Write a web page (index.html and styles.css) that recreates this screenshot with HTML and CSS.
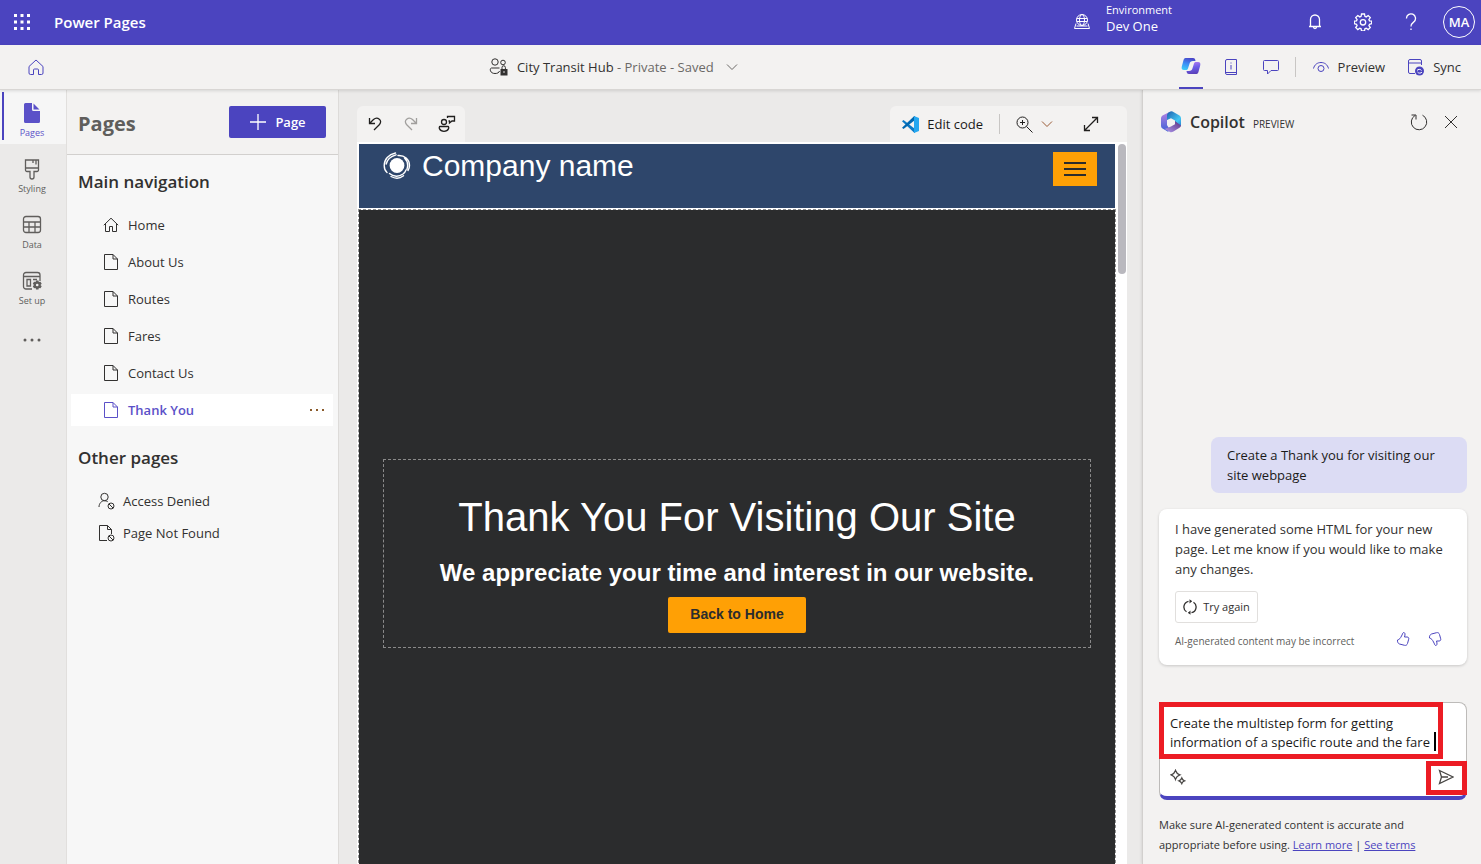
FILE: index.html
```html
<!DOCTYPE html>
<html lang="en">
<head>
<meta charset="utf-8">
<title>Power Pages</title>
<link rel="stylesheet" href="styles.css">
</head>
<body>
<svg class="defs" aria-hidden="true">
  <symbol id="i-page" viewBox="0 0 16 18"><path d="M1.5 1.500H10L14.500 6V16.500H1.500ZM10 1.500V6H14.500"/></symbol>
  <symbol id="i-chevron" viewBox="0 0 12 8"><path d="M1 1.500L6 6.500L11 1.500"/></symbol>
</svg>

<header class="topbar">
  <button class="icon-btn" aria-label="App launcher">
    <svg class="solid" width="16" height="16" viewBox="0 0 16 16"><path d="M0 0h3v3H0zM6.500 0h3v3h-3zM13 0h3v3h-3zM0 6.500h3v3H0zM6.500 6.500h3v3h-3zM13 6.500h3v3h-3zM0 13h3v3H0zM6.500 13h3v3h-3zM13 13h3v3h-3z"/></svg>
  </button>
  <span class="brand">Power Pages</span>
  <div class="environment">
    <svg width="18" height="18" viewBox="0 0 18 18"><circle cx="9" cy="7" r="5.500"/><ellipse cx="9" cy="7" rx="2.500" ry="5.500"/><path d="M3.800 5.500h10.400M3.800 8.500h10.400M3 10.500L1.500 15.500h15L15 10.500M3.500 13h11"/></svg>
    <div class="environment-text"><span class="environment-label">Environment</span><span>Dev One</span></div>
  </div>
  <div class="top-actions">
    <button class="icon-btn" aria-label="Notifications"><svg width="16" height="18" viewBox="0 0 16 18"><path class="bold-line" d="M3.500 13.500V6.500a4.500 4.500 0 0 1 9 0v7M2 13.500h12M6.500 14a1.500 1.500 0 0 0 3 0"/></svg></button>
    <button class="icon-btn" aria-label="Settings"><svg width="18" height="18" viewBox="0 0 18 18"><path class="bold-line" d="M7.500 1h3l.4 2.300 1.300.6 2-1.400 2.100 2.100-1.400 2 .6 1.200 2.200.4v2.500l-2.200.6-.6 1.300 1.400 1.900-2.100 2.100-2-1.400-1.300.6-.4 2.200h-3l-.4-2.200-1.300-.6-2 1.400-2.100-2.100 1.400-1.900-.6-1.300-2.200-.6V8.200l2.200-.4.6-1.200-1.400-2 2.100-2.100 2 1.400 1.300-.6z"/><circle class="bold-line" cx="9" cy="9.300" r="2.700"/></svg></button>
    <button class="icon-btn" aria-label="Help"><svg width="12" height="18" viewBox="0 0 12 18"><path class="bold-line" d="M1.500 5.500a4.500 4.500 0 1 1 7.500 3.200C7 10.300 6 11 6 13.500M6 15.500v1.500"/></svg></button>
    <button class="avatar">MA</button>
  </div>
</header>

<nav class="sitebar" aria-label="Site">
  <button class="icon-btn accent" aria-label="Home"><svg width="16" height="17" viewBox="0 0 16 17"><path d="M1 7.500L8 1l7 6.500v6.500a1.500 1.500 0 0 1-1.500 1.500H10.500V11a1 1 0 0 0-1-1h-3a1 1 0 0 0-1 1v4.500h-3A1.500 1.500 0 0 1 1 14z"/></svg></button>
  <button class="site-name">
    <svg width="20" height="20" viewBox="0 0 20 20"><circle cx="6" cy="5" r="3.200"/><circle cx="14" cy="5.500" r="2.300"/><path d="M10.500 11H2.500c-2 0-2 5.500 3.500 5.500 2.500 0 4-.8 4.500-2.500M13 12v-1.500a1.700 1.700 0 0 1 3.400 0V12"/><path class="fill-only" d="M11.500 12h7v6.500h-7z"/><circle class="hole" cx="15" cy="15" r=".8"/></svg>
    <span>City Transit Hub <span class="muted">- Private - Saved</span></span>
    <svg class="muted-icon" width="12" height="8"><use href="#i-chevron"/></svg>
  </button>
  <div class="site-actions">
    <button class="tool-tab" aria-label="Copilot">
      <svg class="logo" width="20" height="18" viewBox="0 0 20 18"><defs><linearGradient id="g1" x1="0.600" y1="0" x2="0.300" y2="1"><stop offset="0" stop-color="#4a45c8"/><stop offset=".5" stop-color="#3c8cf5"/><stop offset="1" stop-color="#3ccbf7"/></linearGradient><linearGradient id="g2" x1="0.300" y1="0" x2="0.500" y2="1"><stop offset="0" stop-color="#b07cf0"/><stop offset=".5" stop-color="#6a5ce6"/><stop offset="1" stop-color="#5a3fb8"/></linearGradient></defs><path fill="url(#g1)" d="M4.500 1H12c1.700 0 2.300 1 2.500 3H12c-2 0-3 1-3.500 2.800L7 11.500c-.5 1.200-1 1.500-2.500 1.500H3C.8 13 .3 11.500.8 9.500l1.600-6C2.800 2 3.300 1 4.500 1z"/><path fill="url(#g2)" d="M15.500 17H8c-1.700 0-2.300-1-2.500-3H8c2 0 3-1 3.500-2.800L13 6.500C13.500 5.300 14 5 15.500 5H17c2.200 0 2.700 1.500 2.200 3.500l-1.600 6c-.4 1.500-.9 2.500-2.100 2.500z"/></svg>
    </button>
    <button class="icon-btn accent" aria-label="Information"><svg width="14" height="18" viewBox="0 0 14 18"><path d="M3 1.500h9.500v15H3A1.500 1.500 0 0 1 1.500 15V3A1.500 1.500 0 0 1 3 1.500zM1.500 14.500h11M7 4.500v1M7 7v4.500"/></svg></button>
    <button class="icon-btn accent" aria-label="Comments"><svg width="18" height="18" viewBox="0 0 18 18"><path d="M2.500 2.500h13a1 1 0 0 1 1 1v8a1 1 0 0 1-1 1H9L5.500 16v-3.500h-3a1 1 0 0 1-1-1v-8a1 1 0 0 1 1-1z"/></svg></button>
    <span class="divider"></span>
    <button class="text-btn preview"><svg class="accent" width="18" height="16" viewBox="0 0 18 16"><path d="M1.500 9.500C2.500 5.500 5.500 3.500 9 3.500s6.500 2 7.500 6"/><circle cx="9" cy="9.500" r="3"/></svg>Preview</button>
    <button class="text-btn"><svg class="accent" width="18" height="18" viewBox="0 0 18 18"><path d="M8 15.500H3A1.500 1.500 0 0 1 1.500 14V3A1.500 1.500 0 0 1 3 1.500h10A1.500 1.500 0 0 1 14.500 3v4M1.500 5h13"/><circle class="fill-accent" cx="12.500" cy="13" r="4.500"/><path class="light-line" d="M10 12.500c1-1.500 3.500-1.500 4.500 0M10.500 14c1 1.500 3.500 1.500 4.500 0"/></svg>Sync</button>
  </div>
</nav>

<main class="workspace">
  <nav class="rail" aria-label="Workspaces">
    <button class="rail-item active"><svg class="solid" width="18" height="22" viewBox="0 0 18 22"><path d="M2.500 1H9v6.500A1.500 1.500 0 0 0 10.500 9H17v10.500a1.500 1.500 0 0 1-1.500 1.500h-13A1.500 1.500 0 0 1 1 19.500v-17A1.500 1.500 0 0 1 2.500 1zM10.500 1.500L16.500 7.500h-6z"/></svg>Pages</button>
    <button class="rail-item"><svg width="18" height="22" viewBox="0 0 18 22"><path class="bold-line" d="M2.500 2h13v10a1.500 1.500 0 0 1-1.500 1.500h-3V19a2 2 0 0 1-4 0v-5.500H4A1.500 1.500 0 0 1 2.500 12zM2.500 10h13M10 2v3M13 2v4.500"/></svg>Styling</button>
    <button class="rail-item"><svg width="20" height="22" viewBox="0 0 20 22"><path class="bold-line" d="M4 2.500h12A2.500 2.500 0 0 1 18.500 5v11a2.500 2.500 0 0 1-2.500 2.500H4A2.500 2.500 0 0 1 1.500 16V5A2.500 2.500 0 0 1 4 2.500zM1.500 8h17M1.500 13h17M7 8v10.500M13 8v10.500"/></svg>Data</button>
    <button class="rail-item"><svg width="20" height="22" viewBox="0 0 20 22"><path class="bold-line" d="M10 19H4a2.500 2.500 0 0 1-2.500-2.500V5A2.500 2.500 0 0 1 4 2.500h11.500A2.500 2.500 0 0 1 18 5v6M1.500 6.500H18M5 9.500h3.500V16H5zM11 9.500h4"/><path class="fill-only" d="M14 10.500h2.500l.3 1.600 1.700-.4 1.200 2-1.200 1.300 1.200 1.300-1.200 2-1.700-.4-.3 1.600H14l-.4-1.600-1.600.4-1.200-2L12 15l-1.200-1.300 1.200-2 1.600.4z"/><circle class="hole" cx="15.200" cy="15" r="1.300"/></svg>Set up</button>
    <button class="rail-more" aria-label="More"><svg class="solid" width="18" height="4" viewBox="0 0 18 4"><circle cx="2" cy="2" r="1.500"/><circle cx="9" cy="2" r="1.500"/><circle cx="16" cy="2" r="1.500"/></svg></button>
  </nav>

  <aside class="pages">
    <div class="pages-head">
      <h1>Pages</h1>
      <button class="primary"><svg width="18" height="18" viewBox="0 0 18 18"><path class="bold-line" d="M9 1v16M1 9h16"/></svg>Page</button>
    </div>
    <h2>Main navigation</h2>
    <ul class="page-list">
      <li><a href="#"><svg width="16" height="16" viewBox="0 0 16 16"><path d="M.8 8.200L8 1.200l7.200 7M2.500 7v7.500h4V9.500h3v5h4V7"/></svg>Home</a></li>
      <li><a href="#"><svg width="16" height="18"><use href="#i-page"/></svg>About Us</a></li>
      <li><a href="#"><svg width="16" height="18"><use href="#i-page"/></svg>Routes</a></li>
      <li><a href="#"><svg width="16" height="18"><use href="#i-page"/></svg>Fares</a></li>
      <li><a href="#"><svg width="16" height="18"><use href="#i-page"/></svg>Contact Us</a></li>
      <li class="selected"><a href="#"><svg width="16" height="18"><use href="#i-page"/></svg>Thank You</a><button class="row-more" aria-label="Page options"><svg class="solid" width="16" height="4" viewBox="0 0 16 4"><path d="M1 1h2v2H1zM7 1h2v2H7zM13 1h2v2h-2z"/></svg></button></li>
    </ul>
    <h2>Other pages</h2>
    <ul class="page-list other">
      <li><a href="#"><svg width="17" height="18" viewBox="0 0 17 18"><circle cx="6.500" cy="5" r="3.700"/><path d="M1 15c0-3.500 2.500-6.300 5.500-6.300 1.200 0 2.300.4 3.200 1"/><circle cx="13" cy="14" r="3"/><path d="M11 12l4 4"/></svg>Access Denied</a></li>
      <li><a href="#"><svg width="17" height="18" viewBox="0 0 17 18"><path d="M9 16.500H1.500v-15h8L13.500 5.500V10M9.500 1.500v4h4"/><circle cx="13" cy="14" r="3"/><path d="M11 12l4 4"/></svg>Page Not Found</a></li>
    </ul>
  </aside>

  <section class="editor">
    <div class="editor-tools">
      <div class="tool-group">
        <button class="icon-btn" aria-label="Undo"><svg width="14" height="14" viewBox="0 0 14 14"><path class="bold-line" d="M1.500 1v5.500H7M1.500 6.500L5.500 2.500c4-3.500 9.500 1 6 5L6 13"/></svg></button>
        <button class="icon-btn disabled" aria-label="Redo"><svg width="14" height="14" viewBox="0 0 14 14"><path class="bold-line" d="M12.500 1v5.500H7M12.500 6.500L8.500 2.500c-4-3.500-9.500 1-6 5L8 13"/></svg></button>
        <button class="icon-btn" aria-label="Feedback"><svg width="18" height="18" viewBox="0 0 18 18"><circle class="bold-line" cx="6" cy="7" r="2.500"/><path class="bold-line" d="M2 11.500h8c1.500 0 1 4.800-4 4.800s-5.500-4.800-4-4.800zM9.500 3V1.500h7v4.500H14L11.500 8V6h-1"/></svg></button>
      </div>
      <div class="tool-group right">
        <button class="text-btn dark"><svg class="logo" width="17" height="17" viewBox="0 0 17 17"><path fill="#0a79c6" d="M0 5.300l1.500-1.200L13 13v3.500L12.500 17z"/><path fill="#0067b0" d="M0 11.700L1.500 13 13 4V0l-1 .3z"/><path fill="#24a7f0" d="M12 0l5 2v13l-5 2z"/></svg>Edit code</button>
        <span class="divider"></span>
        <button class="zoom-btn" aria-label="Zoom"><svg width="17" height="17" viewBox="0 0 17 17"><circle cx="6.500" cy="6.500" r="5.500"/><path d="M10.500 10.500L16.500 16.500M6.500 4v5M4 6.500h5"/></svg><svg class="rust" width="12" height="8"><use href="#i-chevron"/></svg></button>
        <button class="icon-btn" aria-label="Full screen"><svg width="16" height="16" viewBox="0 0 16 16"><path class="bold-line" d="M1.500 14.500l13-13M9 1.500h5.500V7M1.500 9v5.500H7"/></svg></button>
      </div>
    </div>
    <div class="canvas">
      <div class="site">
        <div class="site-header">
          <div class="company">
            <svg class="logo" width="28" height="28" viewBox="0 0 28 28"><circle cx="14" cy="13.500" r="7.400" fill="#fff"/><path fill="none" stroke="#fff" stroke-width="1.400" stroke-linecap="round" d="M12.500 1C5.500 2.500 1.200 7.500 1.200 13.500c0 3 1 5.500 2.800 7M13 2.800C7 4.500 4 8 3.300 12M15 3.500c6.500-.5 11.500 4 11.500 10 0 2-.5 3.500-1.500 5M21.500 6c3 3 3.800 7 2.500 11M6.500 21.500c4 3.500 9.500 3.500 13.500.5 1.500-1.200 2.500-2.500 3-4M8 24.500c4.500 2.500 9 2 12.500-.7"/></svg>
            <span>Company name</span>
          </div>
          <button class="menu-btn" aria-label="Menu"><span></span><span></span><span></span></button>
        </div>
        <div class="hero">
          <div class="hero-box">
            <h2>Thank You For Visiting Our Site</h2>
            <p>We appreciate your time and interest in our website.</p>
            <button class="cta">Back to Home</button>
          </div>
        </div>
      </div>
      <div class="scroll"><div class="thumb"></div></div>
    </div>
  </section>

  <aside class="copilot">
    <div class="copilot-head">
      <svg class="logo" width="22" height="22" viewBox="0 0 22 22"><defs><linearGradient id="g3" x1="0" y1="0" x2="1" y2="1"><stop offset="0" stop-color="#1d5fae"/><stop offset=".7" stop-color="#42c8f4"/><stop offset="1" stop-color="#2a7fd0"/></linearGradient><linearGradient id="g4" x1="0" y1="1" x2="1" y2="0"><stop offset="0" stop-color="#b09af0"/><stop offset="1" stop-color="#58307f"/></linearGradient><linearGradient id="g5" x1="0" y1="0" x2="0" y2="1"><stop offset="0" stop-color="#b883e4"/><stop offset="1" stop-color="#3e62d6"/></linearGradient></defs><path fill="url(#g5)" d="M10.500.5L8.500 7 7 9v5l3 5-2 1.800L2.500 17.500Q1 16.500 1 15V7q0-1.500 1.500-2.500z"/><path fill="url(#g3)" d="M10.500.5q1-.5 2 0l7 4Q21 5.500 21 7v8l-6-2V9.500L11 7.300 7 9V4q0-1.500 1.500-2.500z"/><path fill="url(#g4)" d="M21 14.500q0 1.500-1.500 2.300l-6.500 4q-1.500.8-3 .3L4.500 18 11 15.500l4-2.300V10z"/></svg>
      <h2>Copilot</h2>
      <span class="preview-tag">PREVIEW</span>
      <button class="icon-btn push" aria-label="Restart"><svg width="18" height="18" viewBox="0 0 18 18"><path d="M12.500 2.200A7.700 7.700 0 1 1 5 2.500M1.500 2h4.500v4.500"/></svg></button>
      <button class="icon-btn" aria-label="Close"><svg width="14" height="14" viewBox="0 0 14 14"><path d="M1 1l12 12M13 1L1 13"/></svg></button>
    </div>
    <div class="chat">
      <p class="user-message">Create a Thank you for visiting our site webpage</p>
      <div class="answer">
        <p>I have generated some HTML for your new page. Let me know if you would like to make any changes.</p>
        <button class="retry"><svg width="14" height="16" viewBox="0 0 14 16"><path class="bold-line" d="M5.500 2.300A5.800 5.800 0 0 0 3.500 12.800M8.500 13.700A5.800 5.800 0 0 0 10.500 3.200M5.500 13.700L7 13.800M8.500 2.300L7 2.200"/><path class="fill-only" d="M6.500.3L9 2.300 6.500 4.400zM7.500 15.700L5 13.700l2.500-2.100z"/></svg>Try again</button>
        <div class="feedback">
          <span>AI-generated content may be incorrect</span>
          <button class="icon-btn accent" aria-label="Like"><svg width="14" height="16" viewBox="0 0 14 16"><path d="M7.500 1.500c1.500 0 2 1.500 1 4.500h2.500c1.500 0 2 1 1.700 2.200l-1.200 4.300c-.5 1.500-1.500 2.200-3 1.800L3.500 13C2 12.500 1.200 10.500 1.500 9 3.500 8.500 4.500 7 5.500 5 6.500 3.500 6.500 2 7.500 1.500z"/></svg></button>
          <button class="icon-btn accent" aria-label="Dislike"><svg width="14" height="16" viewBox="0 0 14 16"><path d="M7.500 14.500c1.500 0 2-1.500 1-4.500h2.500c1.500 0 2-1 1.700-2.200l-1.200-4.300c-.5-1.500-1.500-2.200-3-1.800L3.500 3C2 3.500 1.200 5.500 1.500 7c2 .5 3 2 4 4 1 1.500 1 3 2 3.500z"/></svg></button>
        </div>
      </div>
    </div>
    <div class="composer">
      <textarea aria-label="Message Copilot" rows="2">Create the multistep form for getting
information of a specific route and the fare</textarea>
      <div class="composer-actions">
        <button class="icon-btn" aria-label="Suggestions"><svg width="16" height="16" viewBox="0 0 16 16"><path class="bold-line" d="M5.500 1.500Q6.500 4.500 9.800 5.800 6.500 7 5.500 10.300 4.500 7 1.200 5.800 4.500 4.500 5.500 1.500zM11.800 9Q12.500 11 14.500 11.800 12.500 12.500 11.800 14.500 11 12.500 9 11.800 11 11 11.800 9z"/></svg></button>
        <button class="icon-btn" aria-label="Send"><svg width="16" height="16" viewBox="0 0 16 16"><path class="bold-line" d="M1.500 1.500L15 8 1.500 14.500 3.500 8zM3.500 8H10"/></svg></button>
      </div>
      <span class="caret"></span>
      <span class="mark mark-text"></span>
      <span class="mark mark-send"></span>
    </div>
    <p class="disclaimer">Make sure AI-generated content is accurate and <br>appropriate before using. <a href="#">Learn more</a> | <a href="#">See terms</a></p>
  </aside>
</main>
</body>
</html>
```
FILE: styles.css
```css
* { box-sizing: border-box; }

:root {
  --accent: #4b44bf;
  --ink: #323130;
  --surface: #f3f2f1;
}

body {
  margin: 0;
  height: 100vh;
  display: flex;
  flex-direction: column;
  overflow: hidden;
  background: #ebeae9;
  color: var(--ink);
  font: 13px/20px "Open Sans", "Noto Sans", sans-serif;
}

h1, h2, p, ul { margin: 0; padding: 0; }
ul { list-style: none; }

button {
  display: flex;
  align-items: center;
  justify-content: center;
  margin: 0;
  padding: 0;
  border: 0;
  background: none;
  color: inherit;
  font: inherit;
  white-space: nowrap;
}

svg {
  flex: none;
  fill: none;
  stroke: currentColor;
  stroke-width: 1;
}

.defs { position: absolute; width: 0; height: 0; }
.solid, .fill-only { fill: currentColor; stroke: none; }
.logo { stroke: none; }
.hole { fill: var(--surface); stroke: none; }
.bold-line { stroke-width: 1.3; }
.accent { color: var(--accent); }
.fill-accent { fill: var(--accent); stroke: none; }
.light-line { stroke: #fff; }
.icon-btn { width: 24px; height: 24px; }
.divider { width: 1px; height: 20px; background: #c8c6c4; }

/* Top bar */
.topbar {
  flex: none;
  display: flex;
  align-items: center;
  height: 45px;
  padding: 0 6px 1px 10px;
  background: var(--accent);
  color: #fff;
}
.brand { margin-left: 20px; font-size: 15px; font-weight: 600; }
.environment {
  display: flex;
  align-items: center;
  gap: 15px;
  width: 210px;
  margin-left: auto;
}
.environment-text {
  display: flex;
  flex-direction: column;
  line-height: 16px;
  padding-bottom: 8px;
}
.environment-label { font-size: 11px; }
.top-actions { display: flex; align-items: center; gap: 24px; margin-left: 20px; }
.avatar {
  width: 32px;
  height: 32px;
  margin-left: -4px;
  border: 1px solid #fff;
  border-radius: 50%;
  font-weight: 600;
}

/* Site bar */
.sitebar {
  flex: none;
  position: relative;
  display: flex;
  align-items: center;
  justify-content: space-between;
  height: 45px;
  padding: 0 20px 0 24px;
  background: var(--surface);
  border-bottom: 1px solid #d8d6d4;
  box-shadow: 0 1px 3px rgba(0, 0, 0, 0.12);
}
.site-name { gap: 8px; }
.muted, .muted-icon { color: #6b6967; }
.site-name .muted-icon { margin-left: 4px; }
.site-actions { display: flex; align-items: center; gap: 16px; }
.tool-tab {
  width: 24px;
  height: 44px;
  border-bottom: 2px solid var(--accent);
}
.site-actions .divider { margin-left: -4px; }
.text-btn { gap: 8px; }
.preview { margin-right: 6px; }
.dark { color: #1b1a19; }

/* Workspace */
.workspace { flex: 1; min-height: 0; display: flex; }

.rail { flex: none; width: 67px; border-right: 1px solid #e1dfdd; }
.rail-item {
  flex-direction: column;
  gap: 1px;
  width: 100%;
  height: 56px;
  padding: 10px 2px 0 0;
  font-size: 9px;
  line-height: 16px;
  color: #605e5c;
}
.rail-item.active {
  height: 54px;
  padding-top: 8px;
  background: linear-gradient(var(--accent), var(--accent)) 2px 2px / 2px 48px no-repeat #f6f6f6;
  color: #5b51c8;
}
.rail-more { width: 64px; height: 56px; color: #605e5c; }

.pages {
  flex: none;
  width: 272px;
  background: #f7f7f7;
  border-right: 1px solid #dddbd9;
}
.pages-head {
  display: flex;
  align-items: center;
  justify-content: space-between;
  height: 65px;
  padding: 0 12px 0 11px;
  background: var(--surface);
  border-bottom: 1px solid #d2d0ce;
}
.pages h1 { padding-top: 3px; font-size: 20px; line-height: 28px; color: #605e5c; }
.primary {
  width: 97px;
  height: 32px;
  gap: 8px;
  border-radius: 2px;
  background: var(--accent);
  color: #fff;
  font-weight: 600;
}
.pages h2 { margin: 14px 11px 0; font-size: 17px; line-height: 26px; font-weight: 600; }
.page-list { display: grid; gap: 5px; padding: 14px 5px 5px 4px; }
.page-list li { display: flex; align-items: center; height: 32px; }
.page-list a {
  flex: 1;
  display: flex;
  align-items: center;
  gap: 9px;
  padding-left: 32px;
  color: inherit;
  text-decoration: none;
}
.page-list .selected { background: #fff; color: #5b51c8; font-weight: 600; }
.row-more { width: 32px; height: 32px; color: #8a5a2b; }
.page-list.other { gap: 0; }
.page-list.other a { padding-left: 27px; gap: 8px; }

/* Editor */
.editor {
  flex: 1;
  min-width: 0;
  display: flex;
  flex-direction: column;
  padding: 16px 15px 0 18px;
}
.editor-tools { display: flex; justify-content: space-between; }
.tool-group {
  display: flex;
  align-items: center;
  gap: 12px;
  height: 36px;
  padding: 0 6px;
  border-radius: 6px 6px 0 0;
  background: var(--surface);
  color: #201f1e;
}
.disabled { color: #a19f9d; }
.tool-group.right { gap: 16px; padding: 0 24px 0 12px; }
.zoom-btn { gap: 8px; margin-right: 10px; }
.rust { color: #9a5a35; }
.canvas {
  flex: 1;
  min-height: 0;
  display: flex;
  padding: 2px 0 0 1px;
  background: #fff;
  font-family: "Liberation Sans", Arial, sans-serif;
}
.site { flex: 1; overflow: hidden; color: #fff; }
.site-header {
  display: flex;
  align-items: flex-start;
  justify-content: space-between;
  height: 64px;
  margin: 0 1px 1px;
  padding: 8px 18px 0 24px;
  background: #2e466b;
}
.company { display: flex; align-items: center; gap: 11px; font-size: 30px; line-height: 28px; }
.menu-btn {
  flex-direction: column;
  gap: 4px;
  width: 44px;
  height: 34px;
  background: #ffa005;
}
.menu-btn span { width: 22px; height: 2px; background: #2b2c2d; }
.hero {
  display: flex;
  align-items: center;
  height: 689px;
  padding: 0 24px;
  border: 1px dashed #8f8f8f;
  background: #2b2c2d padding-box;
}
.hero-box {
  flex: 1;
  display: flex;
  flex-direction: column;
  align-items: center;
  height: 189px;
  padding-top: 32px;
  border: 1px dashed #8a8a8a;
  text-align: center;
}
.hero h2 { font-size: 40px; line-height: 50px; font-weight: 400; }
.hero p { margin: 14px 0 8px; font-size: 24px; line-height: 33px; font-weight: 700; }
.cta {
  width: 138px;
  height: 36px;
  padding-bottom: 2px;
  border-radius: 2px;
  background: #ffa005;
  color: #2b2c2d;
  font-size: 14px;
  font-weight: 700;
}
.scroll { flex: none; width: 11px; padding: 0 1px 0 2px; }
.thumb { height: 130px; border-radius: 4px; background: #b9b8be; }

/* Copilot */
.copilot {
  flex: none;
  display: flex;
  flex-direction: column;
  width: 339px;
  padding: 0 14px 9px 16px;
  background: var(--surface);
  border-left: 1px solid #d2d0ce;
  box-shadow: 0 0 3px rgba(0, 0, 0, 0.15);
}
.copilot-head { display: flex; align-items: center; height: 64px; padding: 0 4px 0 1px; gap: 8px; }
.copilot-head h2 { font-size: 16px; font-weight: 600; }
.preview-tag { font-size: 10px; padding-top: 4px; }
.push { margin-left: auto; }
.chat { display: grid; gap: 16px; margin: auto 0 37px; }
.user-message {
  justify-self: end;
  width: 256px;
  padding: 8px 16px;
  border-radius: 8px;
  background: #dcdcf4;
  color: #1b1a19;
}
.answer {
  padding: 10px 16px 14px;
  border-radius: 8px;
  background: #fff;
  box-shadow: 0 1px 3px rgba(0, 0, 0, 0.18);
}
.retry {
  gap: 6px;
  width: 83px;
  height: 32px;
  margin: 12px 0 4px;
  border: 1px solid #e1dfdd;
  border-radius: 3px;
  font-size: 11px;
}
.feedback { display: flex; align-items: center; gap: 8px; padding-right: 4px; }
.feedback span { flex: 1; padding-top: 4px; font-size: 10px; color: #605e5c; white-space: nowrap; }
.composer {
  position: relative;
  height: 98px;
  border: 1px solid #bdbbb9;
  border-bottom: 4px solid var(--accent);
  border-radius: 8px;
  background: #fff;
}
.composer textarea {
  display: block;
  width: 100%;
  height: 58px;
  padding: 11px 0 0 10px;
  border: 0;
  outline: 0;
  resize: none;
  overflow: hidden;
  background: none;
  color: #1b1a19;
  font: inherit;
  line-height: 19px;
}
.composer-actions { display: flex; justify-content: space-between; padding: 4px 8px 4px 6px; color: #484644; }
.caret { position: absolute; left: 274px; top: 29px; width: 2px; height: 19px; background: #000; }
.mark { position: absolute; border: 5px solid #ec1c24; pointer-events: none; }
.mark-text { left: -1px; top: -1px; width: 284px; height: 57px; }
.mark-send { right: -1px; top: 58px; width: 41px; height: 34px; }
.disclaimer { margin-top: 15px; font-size: 11px; }
.disclaimer a { color: var(--accent); }
```
